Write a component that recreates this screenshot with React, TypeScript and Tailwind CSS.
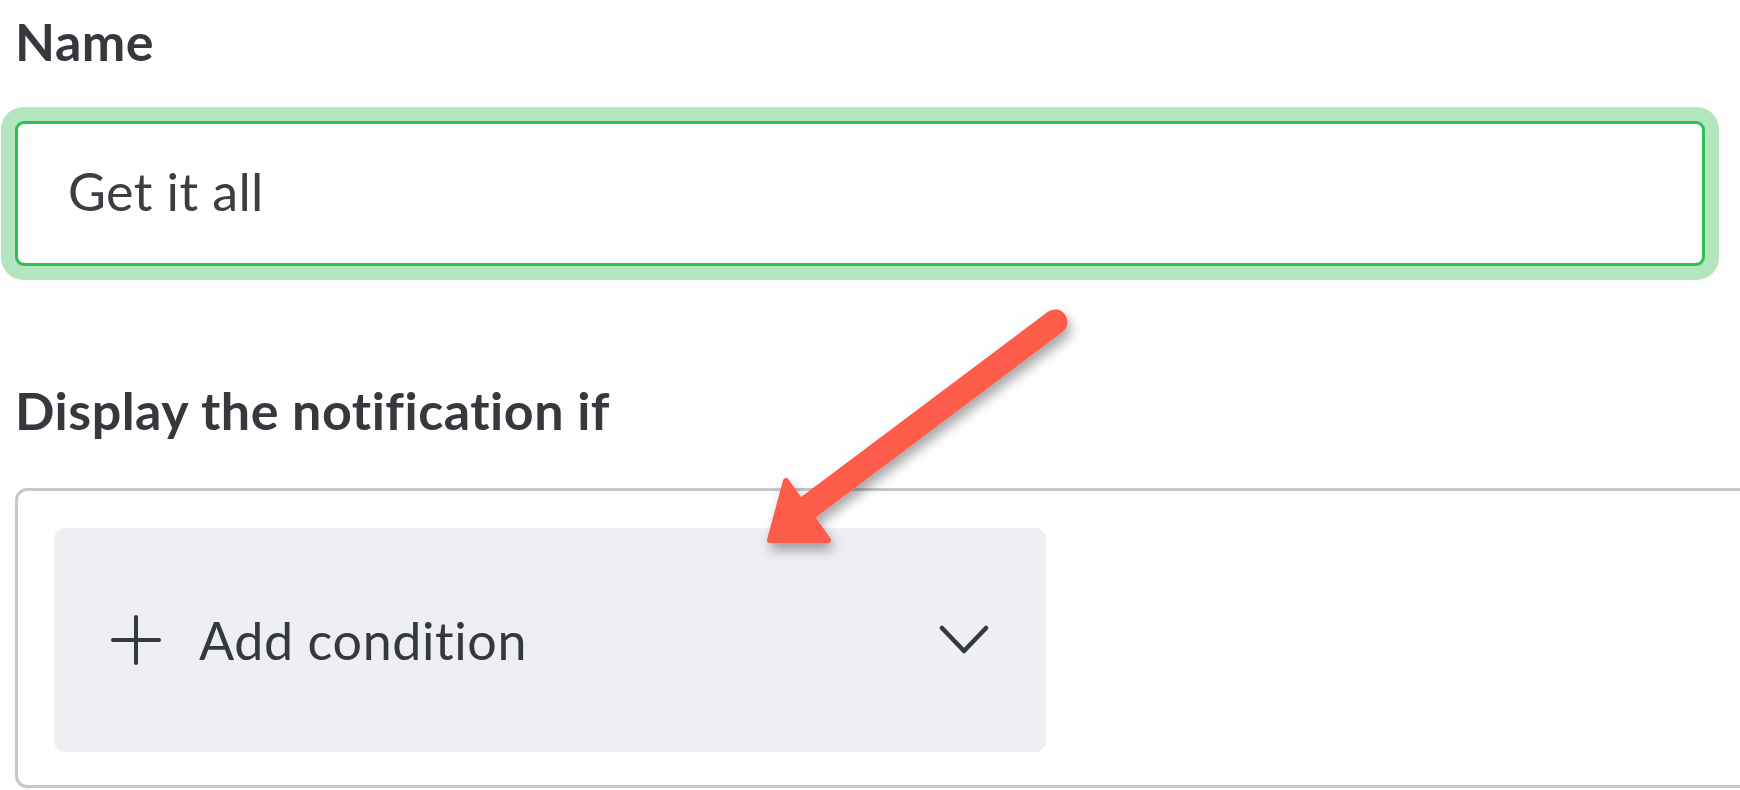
import React from 'react';

const Plus = () => (
  <svg width="50" height="50" viewBox="0 0 50 50" fill="none" stroke="#35383d" strokeWidth="4" strokeLinecap="round">
    <path d="M25 2v46M2 25h46" />
  </svg>
);

const Chevron = () => (
  <svg width="50" height="30" viewBox="0 0 50 30" fill="none" stroke="#35383d" strokeWidth="4.5" strokeLinecap="round" strokeLinejoin="round">
    <path d="M3 3l22 23L47 3" />
  </svg>
);

const Arrow = () => (
  <svg className="absolute left-0 top-0 pointer-events-none" width="1740" height="790" viewBox="0 0 1740 790">
    <defs>
      <filter id="shadow" x="-20%" y="-20%" width="140%" height="140%">
        <feDropShadow dx="3" dy="7" stdDeviation="6" floodColor="#000" floodOpacity="0.35" />
      </filter>
    </defs>
    <g filter="url(#shadow)" fill="#fd5b4b" stroke="#fd5b4b">
      <path d="M1055 322L798 515" strokeWidth="25" strokeLinecap="round" fill="none" />
      <polygon points="770,540 786,481 828,540" strokeWidth="6" strokeLinejoin="round" />
    </g>
  </svg>
);

export default function App() {
  return (
    <div className="relative w-[1740px] h-[790px] overflow-hidden bg-[#fefefe] font-['Lato',sans-serif] text-[#35383d]">
      <div className="flex flex-col pl-[15px] pt-[11px]">
        <label className="text-[52px] leading-[60px] font-bold tracking-[0.5px]">Name</label>
        <div className="mt-[50px] w-[1690px] h-[145px] flex items-center pl-[50px] pb-[6px] border-[3px] border-[#2bc050] rounded-[9px] ring-[14px] ring-[#b3e6be] bg-white text-[52px] tracking-[0.4px] text-[#3b3e43]">
          Get it all
        </div>
        <label className="mt-[114px] text-[52px] leading-[60px] font-bold tracking-[0.5px]">Display the notification if</label>
        <div className="mt-[48px] w-[1800px] h-[300px] border-[3px] border-[#c6c7cb] rounded-[12px] pl-[36px] pt-[37px] bg-white">
          <button className="w-[992px] h-[224px] flex items-center rounded-[11px] bg-[#eeeff3] pl-[57px] pr-[57px] text-[52px] tracking-[0.6px] text-[#35383d]">
            <Plus />
            <span className="ml-[38px] flex-1 text-left">Add condition</span>
            <Chevron />
          </button>
        </div>
      </div>
      <Arrow />
    </div>
  );
}
